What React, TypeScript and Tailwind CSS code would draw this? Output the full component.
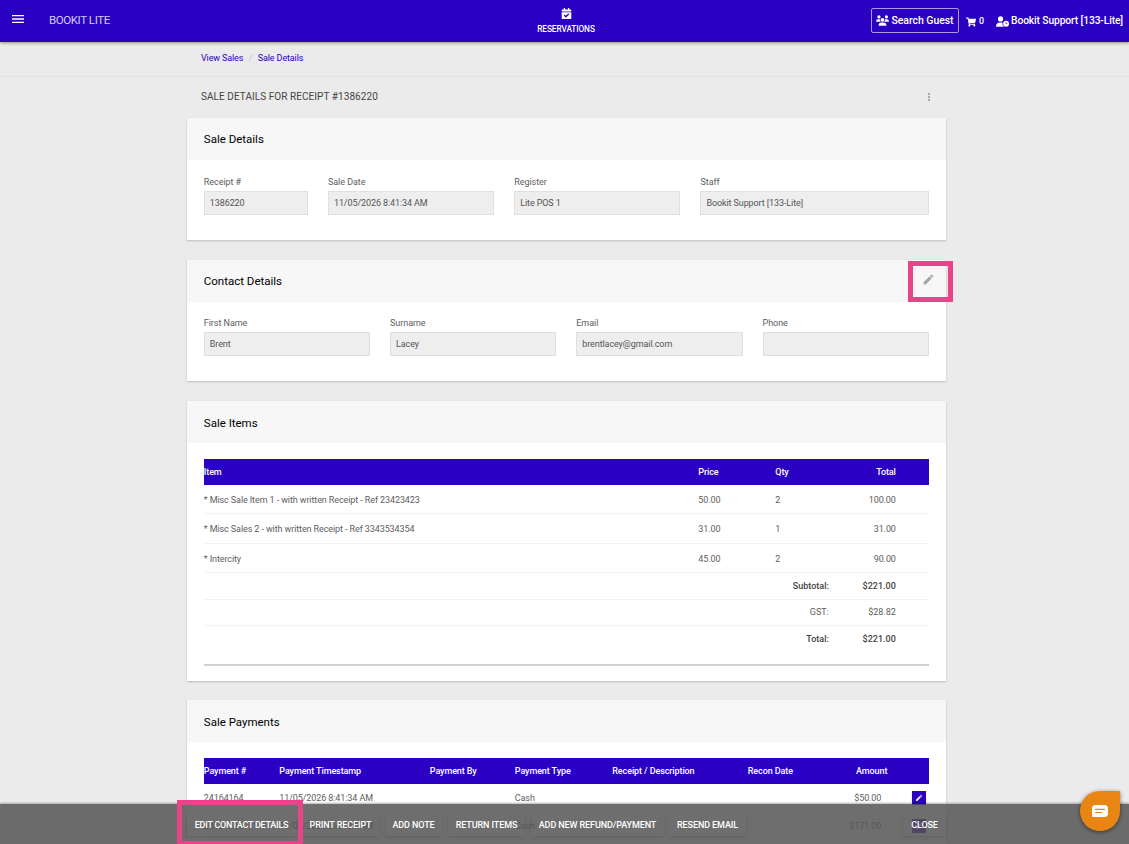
import type { ReactNode } from "react";
import { FaCalendarCheck, FaShoppingCart } from "react-icons/fa";
import { FaUserClock, FaUsers } from "react-icons/fa6";
import { MdEdit, MdMenu, MdMoreVert } from "react-icons/md";

const saleItems = [
  { item: "* Misc Sale Item 1 - with written Receipt - Ref 23423423", price: "50.00", qty: "2", total: "100.00" },
  { item: "* Misc Sales 2 - with written Receipt - Ref 3343534354", price: "31.00", qty: "1", total: "31.00" },
  { item: "* Intercity", price: "45.00", qty: "2", total: "90.00" },
];

const payments = [
  { id: "24164164", time: "11/05/2026 8:41:34 AM", type: "Cash", amount: "$50.00" },
  { id: "24164165", time: "11/05/2026 8:41:34 AM", type: "Cash", amount: "$171.00" },
];

function AppHeader() {
  return (
    <header className="relative z-10 flex h-[42px] items-center bg-[#2b00c3] text-white shadow-[0_1px_3px_rgba(0,0,0,0.4)]">
      <MdMenu className="-mt-1 ml-[10px] size-4" />
      <span className="ml-[23px] text-[11.5px] tracking-[-0.4px] text-[#d5ccf3]">
        BOOKIT LITE
      </span>
      <div className="absolute left-[536px] top-[8px] flex w-[60px] flex-col items-center">
        <FaCalendarCheck className="size-[11px]" />
        <span className="mt-[4px] text-[8.3px] font-medium leading-[12px]">RESERVATIONS</span>
      </div>
      <div className="ml-auto flex items-center pr-[6px] font-medium">
        <button className="-mt-px flex h-[25px] w-[88px] items-center justify-center gap-[2px] whitespace-nowrap rounded-[2px] border border-[#aa99e7] text-[10.5px] tracking-[-0.05px]">
          <FaUsers className="size-[13px]" />
          Search Guest
        </button>
        <span className="ml-[7px] flex items-center gap-[3px] pt-[2px] text-[9px]">
          <FaShoppingCart className="size-[10px]" />0
        </span>
        <span className="ml-[12px] flex items-center gap-[2px] whitespace-nowrap text-[10.3px] tracking-[-0.13px]">
          <FaUserClock className="size-[13px]" />
          Bookit Support [133-Lite]
        </span>
      </div>
    </header>
  );
}

function Card({
  title,
  className,
  action,
  children,
}: {
  title: string;
  className: string;
  action?: ReactNode;
  children: ReactNode;
}) {
  return (
    <section className={`bg-white shadow-[0_1px_2px_rgba(0,0,0,0.2)] ${className}`}>
      <div className="flex h-[42px] items-center justify-between bg-[#f7f7f7] pl-[17.3px] pr-[17.5px]">
        <h2 className="pt-[2px] text-[11.5px] tracking-normal text-black">{title}</h2>
        {action}
      </div>
      <div className="pl-[17.3px] pr-[17.5px]">{children}</div>
    </section>
  );
}

function Field({ label, value, className = "" }: { label: string; value: string; className?: string }) {
  return (
    <div className={className}>
      <div className="h-[15px] text-[9px] leading-[13px] tracking-[-0.05px]">{label}</div>
      <div className="flex h-6 items-center border border-[#e0e0e0] bg-[#eee] px-[5px] pt-px text-[9px] text-[#555]">
        {value}
      </div>
    </div>
  );
}

const itemCols = "grid grid-cols-[494.5px_77px_53px_67.5px] items-center";
const payCols = "grid grid-cols-[75.5px_150.5px_85px_97.5px_135.5px_139.5px] items-center";

function TotalRow({ label, value, bold }: { label: string; value: string; bold?: boolean }) {
  return (
    <div
      className={`flex h-[26.5px] items-center border-b border-[#f2f2f2] pt-px tracking-normal ${bold ? "font-medium text-[#444]" : ""}`}
    >
      <span className="w-[625px] text-right">{label}</span>
      <span className="w-[67px] text-right">{value}</span>
    </div>
  );
}

function ActionButton({ children, className = "" }: { children: string; className?: string }) {
  return (
    <button
      className={`h-[21px] shrink-0 whitespace-nowrap rounded-[1px] pt-px text-[9px] font-medium text-white shadow-[0_1px_3px_rgba(0,0,0,0.12)] ${className}`}
    >
      {children}
    </button>
  );
}

export default function App() {
  return (
    <div className="relative h-[844px] w-[1129px] overflow-hidden bg-[#ebebeb] font-['Roboto',sans-serif] text-[9px] tracking-[-0.1px] text-[#5e5e5e]">
      <AppHeader />
      <nav className="flex h-[35px] items-center border-b border-[#e3e3e3] pl-[201px] text-[9px] tracking-[-0.13px] text-[#2b00c3]">
        <span>View Sales</span>
        <span className="mx-[5.5px] text-[#c4c4c4]">/</span>
        <span>Sale Details</span>
      </nav>
      <main className="ml-[186.5px] w-[759.8px]">
        <div className="flex h-[41px] items-center justify-between pb-[2px] pl-[14.5px] pr-[11px]">
          <h1 className="text-[10px] tracking-[0.06px] text-[#444]">SALE DETAILS FOR RECEIPT #1386220</h1>
          <MdMoreVert className="size-3 text-[#999]" />
        </div>

        <Card title="Sale Details" className="h-[122px]">
          <div className="grid grid-cols-12 gap-5 pt-[16px]">
            <Field className="col-span-2" label="Receipt #" value="1386220" />
            <Field className="col-span-3" label="Sale Date" value="11/05/2026 8:41:34 AM" />
            <Field className="col-span-3" label="Register" value="Lite POS 1" />
            <Field className="col-span-4" label="Staff" value="Bookit Support [133-Lite]" />
          </div>
        </Card>

        <Card
          title="Contact Details"
          className="mt-5 h-[121px]"
          action={<MdEdit className="-mt-[4px] mr-[-6.5px] size-[13px] text-[#a3a3a3]" />}
        >
          <div className="grid grid-cols-4 gap-5 pt-[15.4px]">
            <Field label="First Name" value="Brent" />
            <Field label="Surname" value="Lacey" />
            <Field label="Email" value="brentlacey@gmail.com" />
            <Field label="Phone" value="" />
          </div>
        </Card>

        <Card title="Sale Items" className="mt-[20.4px] h-[279.6px]">
          <div className={`mt-[15.5px] h-[26px] bg-[#2b00c3] pt-px font-medium text-white ${itemCols}`}>
            <span>Item</span>
            <span>Price</span>
            <span>Qty</span>
            <span className="text-right">Total</span>
          </div>
          {saleItems.map((row) => (
            <div key={row.item} className={`h-[29.4px] border-b border-[#f2f2f2] pt-[3px] ${itemCols}`}>
              <span>{row.item}</span>
              <span>{row.price}</span>
              <span>{row.qty}</span>
              <span className="text-right">{row.total}</span>
            </div>
          ))}
          <TotalRow label="Subtotal:" value="$221.00" bold />
          <TotalRow label="GST:" value="$28.82" />
          <div className="h-[39.5px] border-b-2 border-[#d0d0d0]">
            <div className="flex h-[26px] items-center pt-px font-medium tracking-normal text-[#444]">
              <span className="w-[625px] text-right">Total:</span>
              <span className="w-[67px] text-right">$221.00</span>
            </div>
          </div>
        </Card>

        <Card title="Sale Payments" className="mt-[19.3px] h-[200px]">
          <div className={`mt-[15.5px] h-[26px] bg-[#2b00c3] pt-px font-medium text-white ${payCols}`}>
            <span>Payment #</span>
            <span>Payment Timestamp</span>
            <span>Payment By</span>
            <span>Payment Type</span>
            <span>Receipt / Description</span>
            <span className="flex justify-between">
              <span>Recon Date</span>
              <span>Amount</span>
            </span>
          </div>
          {payments.map((row) => (
            <div key={row.id} className="flex h-7 items-center border-b border-[#f2f2f2] pt-[2px]">
              <div className={payCols}>
                <span>{row.id}</span>
                <span>{row.time}</span>
                <span />
                <span>{row.type}</span>
                <span />
                <span className="pr-[6px] text-right">{row.amount}</span>
              </div>
              <span className="ml-[24.5px] flex size-[14px] items-center justify-center bg-[#2b00c3] text-white shadow-sm">
                <MdEdit className="size-2" />
              </span>
            </div>
          ))}
        </Card>
      </main>

      {/* Highlight around the contact edit icon */}
      <div className="absolute left-[908px] top-[261px] h-[41px] w-[45px] border-[5px] border-[#e84489]" />

      <footer className="absolute inset-x-0 bottom-0 flex h-10 items-center bg-[#555]/85 pl-[187px] pr-[183px] pt-[2px] shadow-[0_-1px_2px_rgba(0,0,0,0.3)]">
        <ActionButton className="w-[109px] tracking-[-0.25px]">EDIT CONTACT DETAILS</ActionButton>
        <ActionButton className="ml-[6px] w-[77px]">PRINT RECEIPT</ActionButton>
        <ActionButton className="ml-[6px] w-[57px]">ADD NOTE</ActionButton>
        <ActionButton className="ml-[6px] w-[77px]">RETURN ITEMS</ActionButton>
        <ActionButton className="ml-[6px] w-[133px]">ADD NEW REFUND/PAYMENT</ActionButton>
        <ActionButton className="ml-[5px] w-[77px]">RESEND EMAIL</ActionButton>
        <ActionButton className="ml-auto w-[43px]">CLOSE</ActionButton>
      </footer>

      {/* Highlight around the edit contact button */}
      <div className="absolute left-[177px] top-[800px] h-[46px] w-[126px] border-[5px] border-[#e84489]" />

      <button className="absolute left-[1080px] top-[791px] flex size-10 items-center justify-center rounded-full rounded-tr-[4px] bg-[#e98613] shadow-[0_1px_4px_rgba(0,0,0,0.5)]">
        <svg viewBox="0 0 16 12" className="h-3 w-4">
          <path
            d="M3.5 0h9A3.5 3.5 0 0 1 16 3.5v5a3.5 3.5 0 0 1-3.5 3.5h-11A1.5 1.5 0 0 1 0 10.5v-7A3.5 3.5 0 0 1 3.5 0Z"
            fill="#fff"
          />
          <path d="M3.5 4.3h9M3.5 7.5h6" stroke="#e98613" strokeWidth="1.2" strokeLinecap="round" />
        </svg>
      </button>
    </div>
  );
}
